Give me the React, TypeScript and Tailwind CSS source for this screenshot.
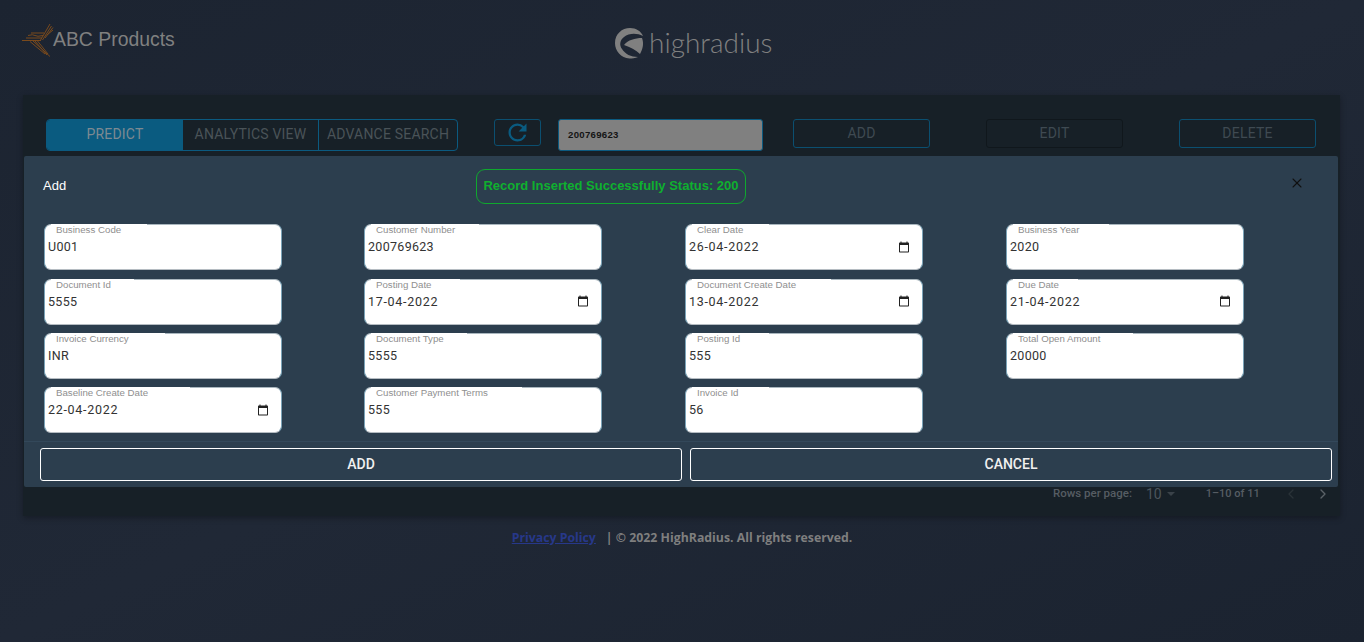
import { X, ChevronLeft, ChevronRight } from 'lucide-react';
import { MdRefresh } from 'react-icons/md';

type Field = { label: string; value: string; date?: boolean } | null;

const fields: Field[] = [
  { label: 'Business Code', value: 'U001' },
  { label: 'Customer Number', value: '200769623' },
  { label: 'Clear Date', value: '26-04-2022', date: true },
  { label: 'Business Year', value: '2020' },
  { label: 'Document Id', value: '5555' },
  { label: 'Posting Date', value: '17-04-2022', date: true },
  { label: 'Document Create Date', value: '13-04-2022', date: true },
  { label: 'Due Date', value: '21-04-2022', date: true },
  { label: 'Invoice Currency', value: 'INR' },
  { label: 'Document Type', value: '5555' },
  { label: 'Posting Id', value: '555' },
  { label: 'Total Open Amount', value: '20000' },
  { label: 'Baseline Create Date', value: '22-04-2022', date: true },
  { label: 'Customer Payment Terms', value: '555' },
  { label: 'Invoice Id', value: '56' },
  null,
];

function CalendarIcon() {
  return (
    <svg width="12" height="12" viewBox="0 0 24 24" className="shrink-0 text-[#222]" fill="currentColor">
      <path d="M20 3h-1V1h-2v2H7V1H5v2H4c-1.1 0-2 .9-2 2v16c0 1.1.9 2 2 2h16c1.1 0 2-.9 2-2V5c0-1.1-.9-2-2-2zm0 18H4V8h16v13z" />
    </svg>
  );
}

function AbcLogo() {
  return (
    <svg width="32" height="34" viewBox="0 0 32 34" fill="none" stroke="#7a4a1c" strokeWidth="1">
      <path d="M0 17.5 L19 17.5 M4 15 L20 15 M6 12.5 Q11 11 13 12.5 T21 12.5 M9 10 L22 10" />
      <path d="M18 18 L28 1 M20.5 17 L29.5 3 M23 15 L31 4.5 M25 12 L31 7" />
      <path d="M11 18 L28 33.5 M13 18 L25 32 M15.5 18 L26 31 M8 18.5 L23 31" />
    </svg>
  );
}

// swirl ring plus the rounded triangle in the middle
function HrLogo() {
  return (
    <svg width="33" height="33" viewBox="0 0 33 33" fill="#808080">
      <path d="M1 17 C1 8 8 2 16 2 C22 2 27 5 29 10 C23 7 15 7 10 11 C6 14 5 19 8 23 C11 28 17 31 24 31 C21 32 18 32.5 15.5 32.5 C7 32 1 25 1 17 Z" />
      <path d="M10 19 C14 14 21 12 28 12 C30 17 29 23 26 28 C22 24 16 21 10 19 Z" />
    </svg>
  );
}

function Box({ field }: { field: NonNullable<Field> }) {
  return (
    <div className="relative flex h-[46px] w-[238px] flex-col rounded-[7px] border border-[#7ba3b8] border-t-[#a9b6be] border-b-[#b5bcc2] bg-white pl-[3px] pr-[12px]">
      <span
        className="absolute -top-px left-[6px] h-px bg-white"
        style={{ width: 15 + field.label.length * 6.2 }}
      />
      <div className="pl-[8px] pt-px text-[9.7px] leading-[8px] text-[#8f8f8f] font-['Liberation_Sans',sans-serif]">{field.label}</div>
      <div className="mt-[5px] flex items-center justify-between text-[12.5px] leading-[15px] text-[#333] font-['Roboto',sans-serif]">
        <span className={field.date ? 'tracking-[0.7px]' : 'tracking-[0.3px]'}>{field.value}</span>
        {field.date && <CalendarIcon />}
      </div>
    </div>
  );
}

function ToolButton({ label, border }: { label: string; border: string }) {
  return (
    <div className={`flex h-[29px] w-[137px] items-center justify-center rounded-[3px] border text-[14px] tracking-[0.2px] text-[#3f4a52] ${border}`}>
      {label}
    </div>
  );
}

export default function App() {
  return (
    <div className="relative h-[642px] overflow-hidden bg-gradient-to-br from-[#1c2431] via-[#202836] to-[#1b2330] font-['Roboto',sans-serif]">
      <header className="relative h-[95px]">
        <div className="flex items-center pl-[22px] pt-[23px]">
          <AbcLogo />
          <span className="-mt-[2px] ml-[-1px] text-[19.4px] leading-[32px] text-[#808080] font-['Liberation_Sans',sans-serif]">ABC Products</span>
        </div>
        <div className="absolute left-[614px] top-[25px] flex items-center">
          <HrLogo />
          <span className="ml-[2px] text-[28px] font-light leading-[34px] text-[#808080] font-['Lato',sans-serif]">highradius</span>
        </div>
      </header>

      <section className="mx-[23px] flex h-[421px] w-[1317px] flex-col bg-[#172027] shadow-[0_2px_6px_rgba(0,0,0,0.3)]">
        <div className="flex items-start pl-[23px] pt-[24px]">
          <div className="flex h-[32px] w-[412px] overflow-hidden rounded-[4px] border border-[#0b5a80] pb-[1px] text-[14px] tracking-[0.2px] text-[#4a5358]">
            <div className="-mb-[1px] flex w-[136px] items-center justify-center bg-[#0a5b80] pb-[1px] text-[#7d8a92]">PREDICT</div>
            <div className="-mb-[1px] flex w-[136px] items-center justify-center border-r border-[#0b5a80] pb-[1px]">ANALYTICS VIEW</div>
            <div className="flex flex-1 items-center justify-center">ADVANCE SEARCH</div>
          </div>
          <div className="ml-[36px] flex h-[27px] w-[47px] items-center justify-center rounded-[3px] border border-[#0b4f70] text-[#0a5b80]">
            <MdRefresh size={27} />
          </div>
          <div className="ml-[17px] flex h-[32px] w-[205px] items-center rounded-[3px] border border-[#0b5a80] bg-[#808080] pl-[9px] text-[9.6px] font-bold tracking-[0.3px] text-[#141414] font-['Liberation_Sans',sans-serif]">
            200769623
          </div>
          <div className="ml-[30px]">
            <ToolButton label="ADD" border="border-[#0b4f70]" />
          </div>
          <div className="ml-[56px]">
            <ToolButton label="EDIT" border="border-[#10171c]" />
          </div>
          <div className="ml-[56px]">
            <ToolButton label="DELETE" border="border-[#0b4f70]" />
          </div>
        </div>

        <div className="mt-auto flex h-[44px] items-center text-[11.5px] font-medium text-[#565d63]">
          <span className="ml-[1030px]">Rows per page:</span>
          <span className="ml-[14px] text-[14px] font-normal text-[#4c555c]">10</span>
          <span className="ml-[5px] h-0 w-0 border-x-[4px] border-t-[4px] border-x-transparent border-t-[#3a4249]" />
          <span className="ml-[31px] text-[11px]">1–10 of 11</span>
          <ChevronLeft size={16} className="ml-[23px] text-[#2a3238]" />
          <ChevronRight size={16} className="ml-[16px] text-[#5b6268]" />
        </div>
      </section>

      <footer className="mt-[13px] flex justify-center text-[12.3px] font-bold leading-[18px] text-[#7f7f7f] font-['Open_Sans',sans-serif]">
        <a className="text-[#27388a] underline">Privacy Policy</a>
        <span className="ml-[10px]">| © 2022 HighRadius. All rights reserved.</span>
      </footer>

      <div className="absolute left-[24px] top-[156px] flex h-[331px] w-[1314px] flex-col rounded-[2px] bg-[#2c3e4e]">
        <div className="flex h-[68.3px] items-center pb-[8px] pl-[19px] pr-[33px]">
          <span className="w-[433px] text-[13px] font-medium text-white font-['Liberation_Sans',sans-serif]">Add</span>
          <div className="flex h-[35px] w-[270px] items-center justify-center rounded-[9px] border border-[#0fa82e] text-[13px] font-bold text-[#0fb02f] font-['Liberation_Sans',sans-serif]">
            Record Inserted Successfully Status: 200
          </div>
          <X size={16} strokeWidth={1.6} className="mb-[6px] ml-auto text-[#111]" />
        </div>
        <div className="grid grid-cols-[320px_321px_321px_1fr] gap-y-[8.35px] pl-[20px]">
          {fields.map((field, index) => (
            <div key={index}>{field && <Box field={field} />}</div>
          ))}
        </div>
        <div className="mt-[8px] flex gap-[8px] border-t border-[#33485a] pl-[16px] pr-[6px] pt-[6px]">
          <div className="flex h-[33px] flex-1 items-center justify-center rounded-[3px] border border-white pb-px text-[14px] font-medium text-[#f0f0f0]">ADD</div>
          <div className="flex h-[33px] flex-1 items-center justify-center rounded-[3px] border border-white pb-px text-[14px] font-medium text-[#f0f0f0]">CANCEL</div>
        </div>
      </div>
    </div>
  );
}
